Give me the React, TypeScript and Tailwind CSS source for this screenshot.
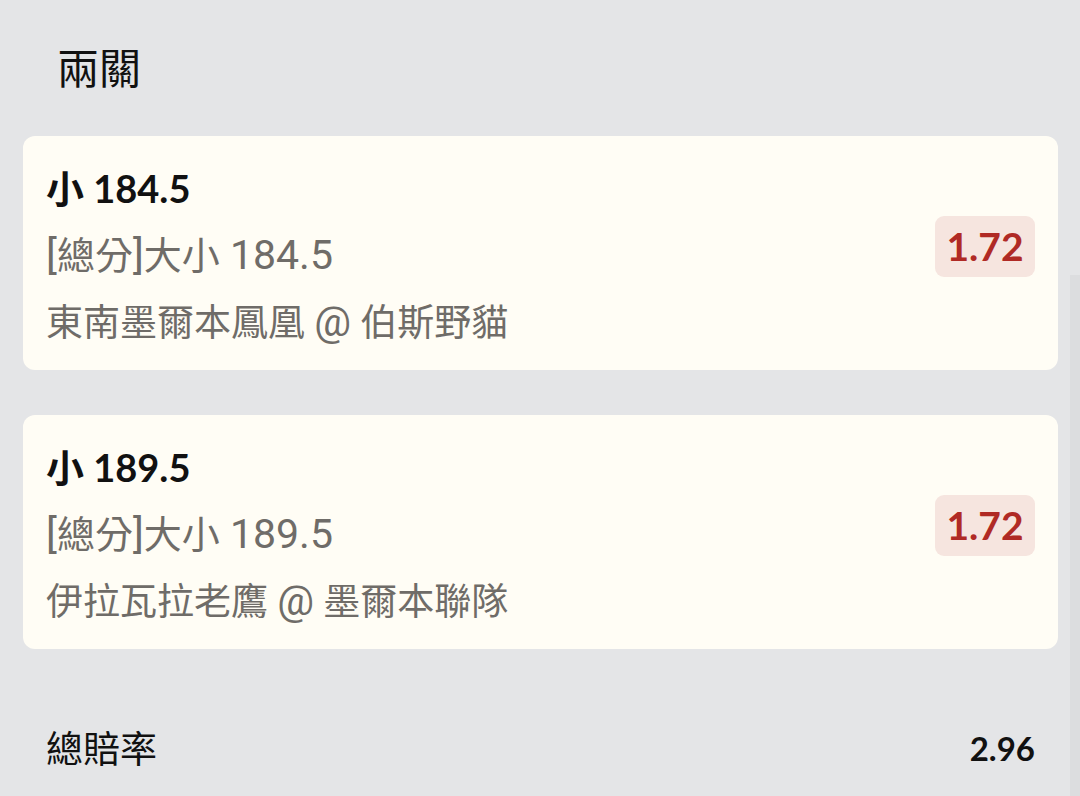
import React from "react";

const font = { fontFamily: 'Lato, "Noto Sans CJK TC", sans-serif' };
const grayFont = { fontFamily: 'Roboto, "Noto Sans CJK TC", sans-serif' };

function Mixed({ text, big }: { text: string; big: RegExp }) {
  const parts = text.split(big);
  return (
    <>
      {parts.map((p, i) =>
        i % 2 === 1 ? (
          <span key={i} className="text-[41px]">
            {p}
          </span>
        ) : (
          <span key={i}>{p}</span>
        )
      )}
    </>
  );
}

function Card({ title, market, match, odds }: { title: string; market: string; match: string; odds: string }) {
  return (
    <div className="flex h-[234px] items-center justify-between rounded-[12px] bg-[#fffdf5] pl-[23px] pr-[23px]">
      <div className="flex flex-col pt-[4px]">
        <div className="h-[67px] text-[38px] font-bold leading-[67px] text-[#111]">{title}</div>
        <div style={grayFont} className="h-[67px] whitespace-pre text-[38px] leading-[67px] text-[#6f6c68]">
          <Mixed text={market} big={/([\[\]]| [0-9.]+)/} />
        </div>
        <div style={grayFont} className="h-[67px] whitespace-pre text-[37px] leading-[67px] text-[#6f6c68]">
          <Mixed text={match} big={/(@)/} />
        </div>
      </div>
      <div className="mb-[14px] flex h-[61px] w-[100px] items-center justify-center rounded-[9px] bg-[#f6e5df] text-[39px] font-bold text-[#b02a25]">
        {odds}
      </div>
    </div>
  );
}

export default function App() {
  return (
    <div style={font} className="relative flex h-[796px] w-[1080px] flex-col overflow-hidden bg-[#e4e5e7]">
      <div className="absolute right-0 top-[275px] h-[521px] w-[10px] bg-[#dcdddf]" />
      <div className="flex h-[136px] items-center pl-[57px] pb-[0px] text-[42px] text-[#111]">兩關</div>
      <div className="flex w-[1058px] flex-col gap-[45px] pl-[23px]">
        <Card title="小 184.5" market="[總分]大小 184.5" match="東南墨爾本鳳凰 @ 伯斯野貓" odds="1.72" />
        <Card title="小 189.5" market="[總分]大小 189.5" match="伊拉瓦拉老鷹 @ 墨爾本聯隊" odds="1.72" />
      </div>
      <div className="mt-[72px] flex w-[1035px] items-center justify-between pl-[46px]">
        <span className="text-[37px] text-[#111]">總賠率</span>
        <span className="text-[33px] font-bold text-[#111]">2.96</span>
      </div>
    </div>
  );
}
